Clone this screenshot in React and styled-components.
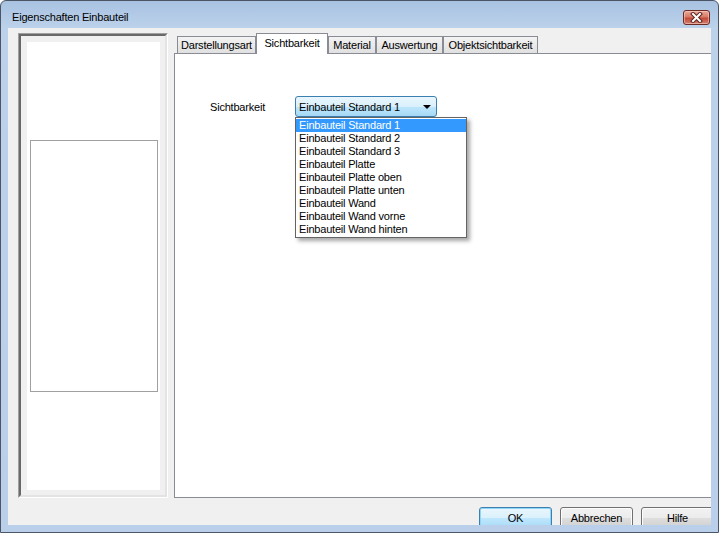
import React from 'react'
import styled, { createGlobalStyle } from 'styled-components'

const GlobalStyle = createGlobalStyle`
    body {
        margin: 0;
        background: #ffffff;
        font-family: Tahoma, "Liberation Sans", Arial, sans-serif;
        font-size: 11px;
        letter-spacing: -0.2px;
        color: #000;
    }
`

const tabs = [
    { label: 'Darstellungsart', width: 79 },
    { label: 'Sichtbarkeit', width: 72, active: true },
    { label: 'Material', width: 48 },
    { label: 'Auswertung', width: 67 },
    { label: 'Objektsichtbarkeit', width: 95 },
]

const options = [
    'Einbauteil Standard 1',
    'Einbauteil Standard 2',
    'Einbauteil Standard 3',
    'Einbauteil Platte',
    'Einbauteil Platte oben',
    'Einbauteil Platte unten',
    'Einbauteil Wand',
    'Einbauteil Wand vorne',
    'Einbauteil Wand hinten',
]

const App = () => {
    return (
        <>
            <GlobalStyle />
            <Window>
                <TitleBar>
                    <Title>Eigenschaften Einbauteil</Title>
                    <CloseButton>
                        <svg width="13" height="11" viewBox="0 0 13 11">
                            <path d="M3 2 L10 9 M10 2 L3 9" stroke="#5a2620" strokeWidth="4" strokeLinecap="square" />
                            <path d="M3 2 L10 9 M10 2 L3 9" stroke="#ffffff" strokeWidth="2" strokeLinecap="square" />
                        </svg>
                    </CloseButton>
                </TitleBar>

                <Client>
                    <Body>
                        <PreviewFrame>
                            <PreviewInset>
                                <PreviewCanvas>
                                    <PreviewBox />
                                </PreviewCanvas>
                            </PreviewInset>
                        </PreviewFrame>

                        <TabControl>
                            <TabStrip>
                                {tabs.map(t => (
                                    <Tab key={t.label} $w={t.width} $active={t.active}>{t.label}</Tab>
                                ))}
                            </TabStrip>
                            <TabPanel>
                                <FieldRow>
                                    <Label>Sichtbarkeit</Label>
                                    <ComboWrap>
                                        <Combo>
                                            <span>Einbauteil Standard 1</span>
                                            <Arrow />
                                        </Combo>
                                        <DropList>
                                            {options.map((o, i) => (
                                                <Item key={o} $selected={i === 0}>{o}</Item>
                                            ))}
                                        </DropList>
                                    </ComboWrap>
                                </FieldRow>
                            </TabPanel>
                        </TabControl>
                    </Body>

                    <ButtonRow>
                        <Button $default>OK</Button>
                        <Button>Abbrechen</Button>
                        <Button>Hilfe</Button>
                    </ButtonRow>
                </Client>
            </Window>
        </>
    )
}


const Window = styled.div`
    width: 719px;
    height: 533px;
    box-sizing: border-box;
    border: 1px solid #4b5566;
    border-radius: 6px 6px 0 0;
    background: linear-gradient(#a8c2e1, #bcd2eb 27px, #bad0ea);
    padding: 0 7px 7px;
    display: flex;
    flex-direction: column;
    overflow: hidden;
`

const TitleBar = styled.div`
    height: 27px;
    flex-shrink: 0;
    box-sizing: border-box;
    padding: 9px 1px 0 4px;
    display: flex;
    justify-content: space-between;
    align-items: flex-start;
`

const Title = styled.div`
    font-size: 11px;
    line-height: 15px;
    color: #000;
`

const CloseButton = styled.div`
    width: 27px;
    height: 15px;
    box-sizing: border-box;
    border: 1px solid #6e2b24;
    border-radius: 3px;
    background: linear-gradient(#e9a99a, #d87b69 45%, #c24a38 55%, #d1806d);
    box-shadow: inset 0 0 0 1px rgba(255, 220, 210, 0.5);
    display: flex;
    align-items: center;
    justify-content: center;
`

const Client = styled.div`
    flex: 1;
    min-height: 0;
    background: #f0f0f0;
    display: flex;
    flex-direction: column;
    overflow: hidden;
`

const Body = styled.div`
    height: 470px;
    flex-shrink: 0;
    box-sizing: border-box;
    padding: 5px 0 0 10px;
    display: flex;
`

const PreviewFrame = styled.div`
    width: 150px;
    box-sizing: border-box;
    border: 1px solid;
    border-color: #a0a0a0 #ffffff #ffffff #a0a0a0;
    display: flex;
`

const PreviewInset = styled.div`
    flex: 1;
    border: 2px solid;
    border-color: #696969 #e3e3e3 #e3e3e3 #696969;
    padding: 6px 5px 5px 6px;
    background: #f0f0f0;
    display: flex;
`

const PreviewCanvas = styled.div`
    flex: 1;
    background: #ffffff;
    display: flex;
    flex-direction: column;
`

const PreviewBox = styled.div`
    margin: 98px 2px 0 3px;
    height: 252px;
    box-sizing: border-box;
    border: 1px solid #a0a0a0;
    background: #ffffff;
`

const TabControl = styled.div`
    flex: 1;
    margin-left: 6px;
    margin-right: -4px;
    display: flex;
    flex-direction: column;
`

const TabStrip = styled.div`
    height: 20px;
    flex-shrink: 0;
    padding-left: 3px;
    display: flex;
    align-items: flex-end;
`

const Tab = styled.div`
    width: ${p => p.$w}px;
    height: ${p => (p.$active ? 21 : 17)}px;
    margin-bottom: ${p => (p.$active ? -1 : 0)}px;
    box-sizing: border-box;
    border: 1px solid #898c95;
    border-bottom: none;
    background: ${p => (p.$active ? '#ffffff' : 'linear-gradient(#f3f3f3, #e0e0e0)')};
    position: relative;
    z-index: ${p => (p.$active ? 1 : 0)};
    display: flex;
    align-items: center;
    justify-content: center;
    padding-bottom: ${p => (p.$active ? 2 : 0)}px;
    white-space: nowrap;
`

const TabPanel = styled.div`
    flex: 1;
    border: 1px solid #898c95;
    background: #ffffff;
`

const FieldRow = styled.div`
    padding: 42px 0 0 35px;
    display: flex;
    align-items: center;
`

const Label = styled.div`
    width: 85px;
`

const ComboWrap = styled.div`
    position: relative;
    width: 142px;
    height: 21px;
`

const Combo = styled.div`
    height: 100%;
    box-sizing: border-box;
    border: 1px solid #3c7fb1;
    border-radius: 3px;
    background: linear-gradient(#eaf6fd, #d9f0fc 50%, #bee6fd 50%, #a7d9f5);
    padding: 0 5px 0 3px;
    display: flex;
    align-items: center;
    justify-content: space-between;
    white-space: nowrap;
`

const Arrow = styled.span`
    width: 0;
    height: 0;
    border-left: 4px solid transparent;
    border-right: 4px solid transparent;
    border-top: 4px solid #000;
`

const DropList = styled.div`
    position: absolute;
    top: 21px;
    left: 0;
    width: 172px;
    box-sizing: border-box;
    border: 1px solid #646464;
    background: #ffffff;
    padding: 1px 0;
    box-shadow: 3px 3px 4px rgba(0, 0, 0, 0.35);
    z-index: 5;
`

const Item = styled.div`
    height: 13px;
    line-height: 13px;
    padding-left: 3px;
    white-space: nowrap;
    background: ${p => (p.$selected ? '#3399ff' : 'transparent')};
    color: ${p => (p.$selected ? '#ffffff' : '#000000')};
`

const ButtonRow = styled.div`
    flex-shrink: 0;
    margin-top: 9px;
    margin-right: -3px;
    display: flex;
    justify-content: flex-end;
    gap: 8px;
`

const Button = styled.div`
    width: 73px;
    height: 23px;
    flex-shrink: 0;
    box-sizing: border-box;
    border: 1px solid ${p => (p.$default ? '#3c7fb1' : '#707070')};
    border-radius: 3px;
    background: ${p => (p.$default
        ? 'linear-gradient(#eaf6fd, #d9f0fc 50%, #bee6fd 50%, #a7d9f5)'
        : 'linear-gradient(#f2f2f2, #ebebeb 50%, #dddddd 50%, #cfcfcf)')};
    box-shadow: inset 0 0 0 1px ${p => (p.$default ? '#8ed5f8' : '#fcfcfc')};
    display: flex;
    align-items: center;
    justify-content: center;
    padding-bottom: 2px;
`


export default App
